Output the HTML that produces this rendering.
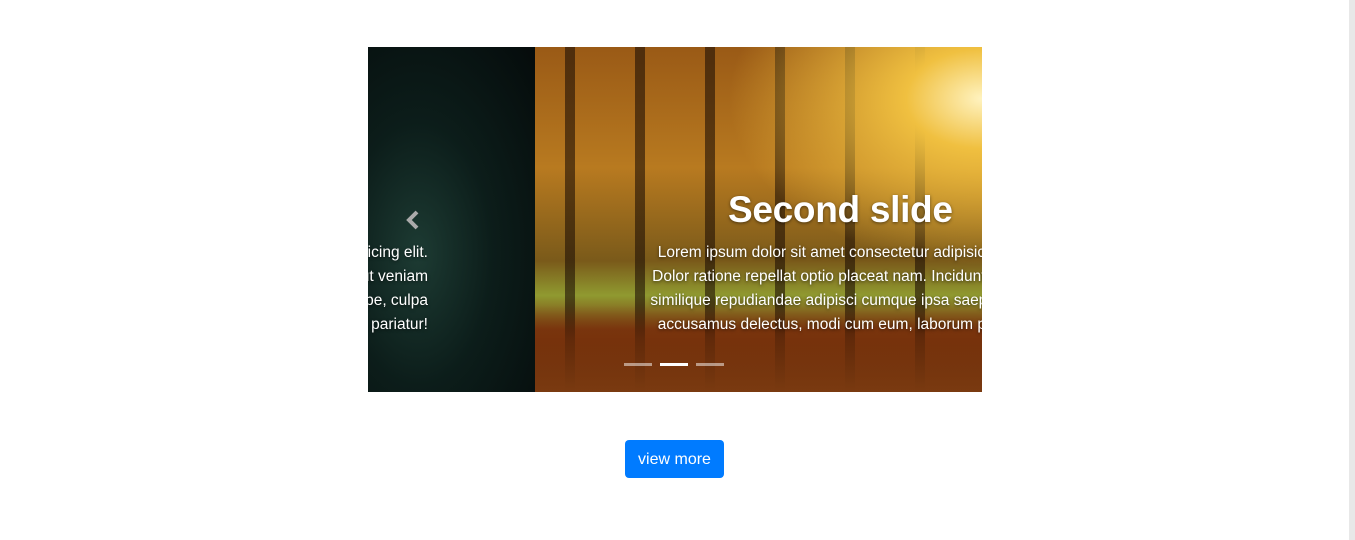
<!DOCTYPE html>
<html><head><style>
body{margin:0;width:1355px;height:540px;background:#fff;overflow:hidden;font-family:"Liberation Sans",sans-serif;position:relative}
.sb{position:absolute;right:0;top:0;width:6px;height:540px;background:#e8e8e8}
.car{position:absolute;left:368px;top:47px;width:614px;height:345px;overflow:hidden}
.left{position:absolute;left:0;top:0;width:167px;height:345px;background:radial-gradient(ellipse at 30% 60%,#1d3b33 0%,#0c1d1a 45%,#050b0b 100%)}
.right{position:absolute;left:167px;top:0;width:447px;height:345px;background:
linear-gradient(180deg,rgba(0,0,0,0) 0%,rgba(0,0,0,0) 75%,rgba(120,50,10,.6) 85%,#7a3a10 100%),
radial-gradient(ellipse at 100% 15%,#fff3c0 0%,#f0c040 12%,rgba(200,120,20,0) 40%),
repeating-linear-gradient(90deg,rgba(30,15,5,.0) 0 30px,rgba(30,15,5,.6) 30px 40px,rgba(30,15,5,0) 40px 70px),
linear-gradient(180deg,#9a5a16 0%,#b87a20 35%,#7a5a1a 62%,#909a30 72%,#7a3610 82%,#5e240a 100%)}
.t{position:absolute;color:#fff;text-shadow:0 1px 3px rgba(0,0,0,.6);white-space:nowrap}
h2{position:absolute;left:360px;top:142px;margin:0;font-size:37px;font-weight:bold;color:#fff;white-space:nowrap;text-shadow:0 1px 3px rgba(0,0,0,.5);letter-spacing:-0.3px}
.p{font-size:15.5px;line-height:24px;text-align:center}
.ind{position:absolute;top:316px;height:3px;width:28px;background:rgba(255,255,255,.5)}
.btn{position:absolute;left:625px;top:440px;width:99px;height:38px;background:#007bff;color:#fff;border-radius:4px;font-size:16px;line-height:39px;text-align:center}
</style></head><body>
<div class="car">
<div class="left"></div>
<div class="right"></div>
<div class="t p" style="left:-340px;top:194px;width:400px;text-align:right">Lorem ipsum dolor sit amet consectetur adipisicing elit.<br>Dolor ratione repellat optio placeat nam ut veniam<br>similique repudiandae adipisci cumque saepe, culpa<br>accusamus delectus, laborum pariatur!</div>
<svg style="position:absolute;left:38px;top:163px" width="14" height="20" viewBox="0 0 14 20"><path d="M11 2 L3 10 L11 18" stroke="#aaa" stroke-width="4" fill="none"/></svg>
<h2>Second slide</h2>
<div class="t p" style="left:228px;top:194px;width:500px">Lorem ipsum dolor sit amet consectetur adipisicing elit.<br>Dolor ratione repellat optio placeat nam. Incidunt veniam<br>similique repudiandae adipisci cumque ipsa saepe, culpa<br>accusamus delectus, modi cum eum, laborum pariatur!</div>
<div class="ind" style="left:256px"></div>
<div class="ind" style="left:292px;background:#fff"></div>
<div class="ind" style="left:328px"></div>
</div>
<div class="btn">view more</div>
<div class="sb"></div>
</body></html>
